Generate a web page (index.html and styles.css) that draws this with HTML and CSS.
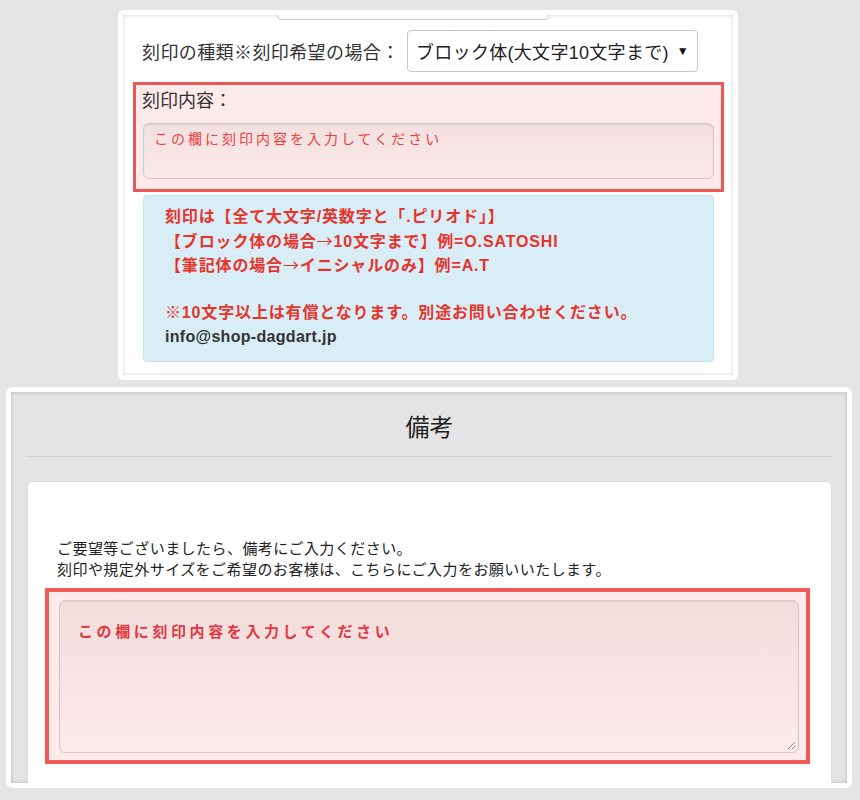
FILE: index.html
```html
<!DOCTYPE html>
<html lang="ja">
<head>
<meta charset="utf-8">
<title>刻印内容</title>
<link rel="stylesheet" href="styles.css">
</head>
<body>
<div class="page">
  <section class="card-top">
    <div class="card-top-inner">
      <div class="prev-field"></div>
      <div class="row">
        <div class="row-label">刻印の種類※刻印希望の場合：</div>
        <div class="select"><span class="select-text">ブロック体(大文字10文字まで)</span><span class="arrow">▼</span></div>
      </div>
      <div class="hl hl-top">
        <div class="hl-label">刻印内容：</div>
        <div class="ta ta-small">この欄に刻印内容を入力してください</div>
      </div>
      <div class="info">
        <p class="red">刻印は【全て大文字/英数字と「.ピリオド」】<br>【ブロック体の場合<span class="cjk">→</span>10文字まで】例=O.SATOSHI<br>【筆記体の場合<span class="cjk">→</span>イニシャルのみ】例=A.T</p>
        <p class="red">※10文字以上は有償となります。別途お問い合わせください。</p>
        <p class="mail">info@shop-dagdart.jp</p>
      </div>
    </div>
  </section>

  <section class="panel">
    <div class="panel-inner">
      <h2 class="panel-title">備考</h2>
      <div class="panel-card">
        <p class="note">ご要望等ございましたら、備考にご入力ください。<br>刻印や規定外サイズをご希望のお客様は、こちらにご入力をお願いいたします。</p>
        <div class="hl hl-bottom">
          <div class="ta ta-large">この欄に刻印内容を入力してください
            <svg class="grip" width="9" height="9" viewBox="0 0 9 9"><path d="M8 1 L1 8 M8 5 L5 8" stroke="#8a8a8a" stroke-width="1" fill="none"/></svg>
          </div>
        </div>
      </div>
    </div>
  </section>
</div>
</body>
</html>
```
FILE: styles.css
```css
* { box-sizing: border-box; }

body {
  margin: 0;
  background: #e5e5e5;
  font-family: "Liberation Sans", "Noto Sans CJK JP", sans-serif;
  color: #333;
}

.page {
  padding-top: 10px;
  display: flex;
  flex-direction: column;
}

/* ---------- top card ---------- */
.card-top {
  margin-left: 118px;
  width: 620px;
  height: 370px;
  background: #fff;
  border-radius: 6px;
  padding: 5px;
}

.card-top-inner {
  height: 100%;
  overflow: hidden;
  box-shadow: inset 0 0 4px rgba(0, 0, 0, 0.18);
  display: flex;
  flex-direction: column;
}

.prev-field {
  margin-top: -15px;
  margin-left: 154px;
  width: 272px;
  height: 20px;
  border: 1px solid #c9c9c9;
  border-radius: 4px;
  background: #fff;
  flex: none;
}

.row {
  margin-top: 10px;
  padding-left: 19px;
  display: grid;
  grid-template-columns: 265px 291px;
  align-items: center;
}

.row-label {
  font-size: 18px;
  letter-spacing: 0.4px;
  color: #333;
  white-space: nowrap;
}

.select {
  height: 42px;
  border: 1px solid #c8c8c8;
  border-radius: 4px;
  background: #fff;
  display: flex;
  align-items: center;
  justify-content: space-between;
  padding: 0 8px 0 8px;
  font-size: 18px;
  letter-spacing: 0.3px;
  color: #222;
  white-space: nowrap;
}

.arrow {
  font-size: 12px;
  color: #111;
}

.hl {
  background: #fdebeb;
  flex: none;
}

.hl-top {
  margin: 10px 9px 0 10px;
  border: 3px solid #ef5656;
  padding: 4px 7px 10px 6px;
}

.hl-label {
  font-size: 18px;
  line-height: 24px;
  color: #333;
}

.ta {
  border: 1px solid #d8c5c5;
  border-radius: 6px;
  background: linear-gradient(#f3dfdf, #fbe9e9);
  box-shadow: inset 0 1px 2px rgba(0, 0, 0, 0.07);
  color: #e8413e;
}

.ta-small {
  margin: 10px 0 0 1px;
  height: 56px;
  padding: 6px 10px;
  font-size: 14px;
  line-height: 18px;
  letter-spacing: 3px;
  white-space: nowrap;
}

.info {
  margin: 3px 19px 0 20px;
  height: 167px;
  background: #d9edf7;
  border: 1px solid #bfe6f1;
  border-radius: 4px;
  padding: 9px 20px 0 21px;
  font-size: 16px;
  font-weight: bold;
  line-height: 23.5px;
  flex: none;
}

.info p { margin: 0; white-space: nowrap; }
.info p.red { color: #e5342c; letter-spacing: 0.85px; }
.info p.red:first-child { margin-bottom: 23.5px; }
.info p.mail { color: #333; letter-spacing: 0.3px; }
.cjk { font-family: "Noto Sans CJK JP", sans-serif; font-weight: normal; }

/* ---------- bottom panel ---------- */
.panel {
  margin-top: 7px;
  margin-left: 6px;
  width: 846px;
  height: 401px;
  background: #fff;
  border-radius: 7px;
  padding: 5px;
}

.panel-inner {
  height: 100%;
  background: #e4e4e4;
  box-shadow: inset 0 0 4px rgba(0, 0, 0, 0.2);
  padding: 0 15px 0 16px;
  display: flex;
  flex-direction: column;
  overflow: hidden;
}

.panel-title {
  margin: 0;
  padding-top: 8px;
  height: 65px;
  line-height: 56px;
  text-align: center;
  font-size: 24px;
  font-weight: normal;
  color: #222;
  border-bottom: 1px solid #d3d3d3;
  flex: none;
}

.panel-card {
  margin-top: 24px;
  flex: 1;
  background: #fff;
  border: 1px solid #dcdcdc;
  border-bottom: none;
  border-radius: 6px 6px 0 0;
  padding: 56px 21px 0 17px;
}

.note {
  margin: 0 0 0 12px;
  font-size: 15px;
  line-height: 21px;
  letter-spacing: 0.45px;
  color: #222;
  white-space: nowrap;
}

.hl-bottom {
  margin-top: 8px;
  border: 4px solid #f25959;
  padding: 8px 7px 7px 10px;
}

.ta-large {
  position: relative;
  height: 153px;
  padding: 21px 18px;
  font-size: 15px;
  font-weight: bold;
  line-height: 20px;
  letter-spacing: 3.6px;
  color: #e2383f;
  background: linear-gradient(#f2dddd, #fdeaea);
}

.grip {
  position: absolute;
  right: 2px;
  bottom: 2px;
}
```
